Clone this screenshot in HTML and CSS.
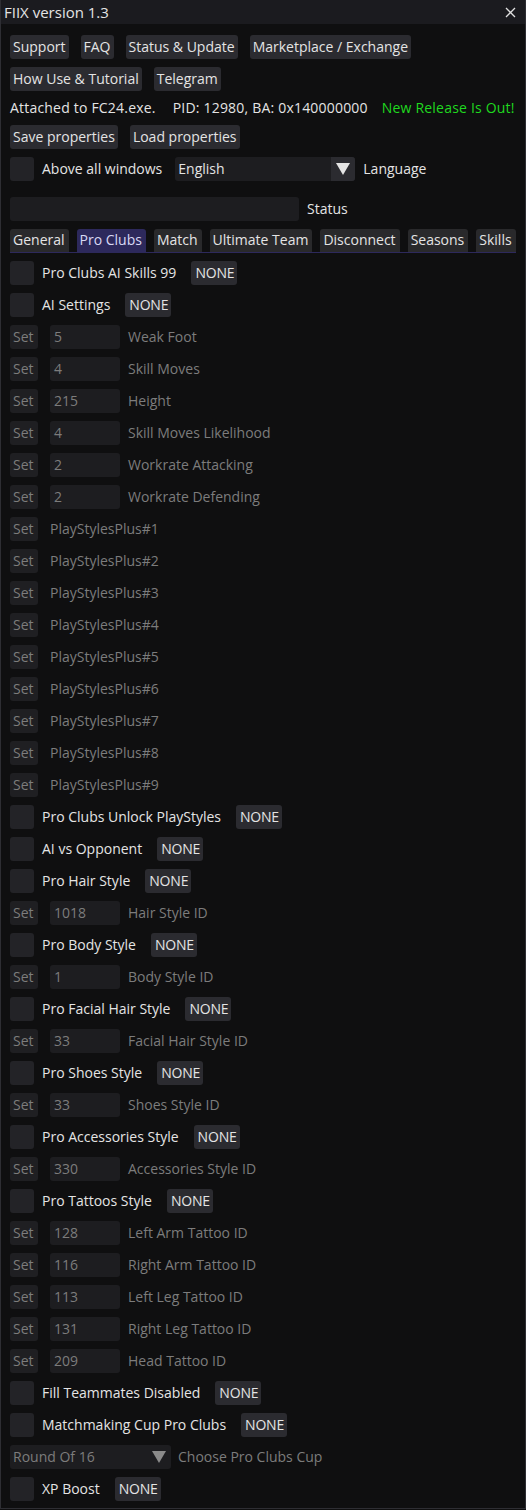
FILE: index.html
```html
<!DOCTYPE html>
<html lang="en">
<head>
    <meta charset="UTF-8">
    <title>FIIX version 1.3</title>
    <link rel="stylesheet" href="styles.css">
</head>
<body>
    <div class="window">
        <div class="titlebar">
            <span>FIIX version 1.3</span>
            <svg class="close" width="11" height="11" viewBox="0 0 11 11"><path d="M1 1L10 10M10 1L1 10" stroke="#e0e0e0" stroke-width="1.3"/></svg>
        </div>

        <div class="content">
            <div class="row">
                <span class="btn">Support</span>
                <span class="btn">FAQ</span>
                <span class="btn">Status &amp; Update</span>
                <span class="btn">Marketplace / Exchange</span>
            </div>
            <div class="row">
                <span class="btn">How Use &amp; Tutorial</span>
                <span class="btn">Telegram</span>
            </div>
            <div class="row text-row">
                <span class="attached">Attached to FC24.exe.<span class="gap"></span>PID: 12980, BA: 0x140000000</span>
                <span class="green">New Release Is Out!</span>
            </div>
            <div class="row">
                <span class="btn">Save properties</span>
                <span class="btn">Load properties</span>
            </div>
            <div class="row">
                <span class="check"></span>
                <span class="label">Above all windows</span>
                <span class="combo lang"><span>English</span><span class="arrow"><i></i></span></span>
                <span class="label">Language</span>
            </div>
            <div class="row spaced">
                <span class="input status-input"></span>
                <span class="label">Status</span>
            </div>

            <div class="tabs">
                <span class="tab">General</span>
                <span class="tab active">Pro Clubs</span>
                <span class="tab">Match</span>
                <span class="tab">Ultimate Team</span>
                <span class="tab">Disconnect</span>
                <span class="tab">Seasons</span>
                <span class="tab">Skills</span>
            </div>

            <div class="list" id="list"></div>
        </div>
    </div>

    <script>
        // rows of the Pro Clubs tab
        const rows = [
            ['c', 'Pro Clubs AI Skills 99'],
            ['c', 'AI Settings'],
            ['s', '5', 'Weak Foot'],
            ['s', '4', 'Skill Moves'],
            ['s', '215', 'Height'],
            ['s', '4', 'Skill Moves Likelihood'],
            ['s', '2', 'Workrate Attacking'],
            ['s', '2', 'Workrate Defending'],
            ['p', 'PlayStylesPlus#1'],
            ['p', 'PlayStylesPlus#2'],
            ['p', 'PlayStylesPlus#3'],
            ['p', 'PlayStylesPlus#4'],
            ['p', 'PlayStylesPlus#5'],
            ['p', 'PlayStylesPlus#6'],
            ['p', 'PlayStylesPlus#7'],
            ['p', 'PlayStylesPlus#8'],
            ['p', 'PlayStylesPlus#9'],
            ['c', 'Pro Clubs Unlock PlayStyles'],
            ['c', 'AI vs Opponent'],
            ['c', 'Pro Hair Style'],
            ['s', '1018', 'Hair Style ID'],
            ['c', 'Pro Body Style'],
            ['s', '1', 'Body Style ID'],
            ['c', 'Pro Facial Hair Style'],
            ['s', '33', 'Facial Hair Style ID'],
            ['c', 'Pro Shoes Style'],
            ['s', '33', 'Shoes Style ID'],
            ['c', 'Pro Accessories Style'],
            ['s', '330', 'Accessories Style ID'],
            ['c', 'Pro Tattoos Style'],
            ['s', '128', 'Left Arm Tattoo ID'],
            ['s', '116', 'Right Arm Tattoo ID'],
            ['s', '113', 'Left Leg Tattoo ID'],
            ['s', '131', 'Right Leg Tattoo ID'],
            ['s', '209', 'Head Tattoo ID'],
            ['c', 'Fill Teammates Disabled'],
            ['c', 'Matchmaking Cup Pro Clubs'],
            ['d', 'Round Of 16', 'Choose Pro Clubs Cup'],
            ['c', 'XP Boost']
        ];

        const list = document.getElementById('list');
        for (const r of rows) {
            const row = document.createElement('div');
            row.className = 'row';
            if (r[0] === 'c') {
                row.innerHTML = `<span class="check"></span><span class="label">${r[1]}</span><span class="btn none">NONE</span>`;
            } else if (r[0] === 's') {
                row.innerHTML = `<span class="btn dim">Set</span><span class="input small">${r[1]}</span><span class="label dim-text">${r[2]}</span>`;
            } else if (r[0] === 'p') {
                row.innerHTML = `<span class="btn dim">Set</span><span class="label plus">${r[1]}</span>`;
            } else {
                row.innerHTML = `<span class="combo cup"><span>${r[1]}</span><span class="arrow"><i></i></span></span><span class="label dim-text">${r[2]}</span>`;
            }
            list.appendChild(row);
        }
    </script>
</body>
</html>
```

FILE: styles.css
```css
:root {
    --bg: #0f0f10;
    --title-bg: #1b1b1f;
    --border: #2e2e33;
    --btn: #2b2b30;
    --frame: #1d1d20;
    --text: #e4e4e4;
    --dim: #7c7c7c;
    --tab-active: #2d295c;
}

html, body {
    margin: 0;
    height: 100%;
}

body {
    background: var(--bg);
    color: var(--text);
    font-family: 'Open Sans', sans-serif;
    font-size: 14px;
}

.window {
    box-sizing: border-box;
    height: 1509px;
    border: 1px solid var(--border);
    border-top: none;
    background: var(--bg);
}

.titlebar {
    height: 24px;
    background: var(--title-bg);
    display: flex;
    align-items: center;
    justify-content: space-between;
    padding: 0 9px 0 3px;
    font-size: 15px;
}

.close {
    display: block;
}

.content {
    padding: 11px 9px 0 9px;
    display: flex;
    flex-direction: column;
    gap: 8px;
}

.row {
    display: flex;
    align-items: center;
    height: 24px;
    gap: 12px;
    white-space: nowrap;
}

.label, .text-row span {
    padding-bottom: 2px;
}

.text-row {
    height: 18px;
    gap: 14px;
}

.attached {
    letter-spacing: 0.2px;
}

.attached .gap {
    display: inline-block;
    width: 17px;
}

.green {
    color: #1fd81f;
    letter-spacing: 0.2px;
}

.spaced {
    margin-top: 8px;
}

.btn {
    height: 24px;
    line-height: 23px;
    padding: 0 3px;
    background: var(--btn);
    border-radius: 3px;
}

.btn.none {
    padding: 0 3px 0 4px;
    letter-spacing: -0.2px;
}

.btn.dim {
    background: #1f1f22;
    color: var(--dim);
    width: 22px;
}

.check {
    width: 24px;
    height: 24px;
    background: #232327;
    border-radius: 3px;
    margin-right: -4px;
}

.check + .label {
    margin-right: 3px;
}

.dim-text {
    color: var(--dim);
    margin-left: -4px;
}

.plus {
    color: var(--dim);
}

.input {
    height: 24px;
    line-height: 23px;
    background: var(--frame);
    border-radius: 3px;
    box-sizing: border-box;
    padding: 0 4px;
}

.input.small {
    width: 70px;
    color: var(--dim);
}

.status-input {
    width: 289px;
    margin-right: -4px;
}

.combo {
    display: flex;
    height: 24px;
    line-height: 23px;
    background: var(--frame);
    border-radius: 3px;
    box-sizing: border-box;
    padding-left: 3px;
    justify-content: space-between;
}

.combo .arrow {
    width: 24px;
    display: flex;
    align-items: center;
    justify-content: center;
    border-radius: 0 3px 3px 0;
}

.combo .arrow i {
    width: 0;
    height: 0;
    border-left: 7px solid transparent;
    border-right: 7px solid transparent;
    border-top: 12px solid #e4e4e4;
}

.lang {
    width: 180px;
    margin-left: -2px;
    margin-right: -4px;
}

.lang .arrow {
    background: #2b2b30;
}

.cup {
    width: 161px;
    color: var(--dim);
    margin-right: -1px;
}

.cup .arrow i {
    border-top-color: #8a8a8a;
}

.tabs {
    display: flex;
    gap: 8px;
    height: 23px;
    border-bottom: 1px solid var(--tab-active);
}

.tab {
    height: 23px;
    line-height: 22px;
    padding: 0 4px 0 3px;
    background: #29292b;
    border-radius: 3px 3px 0 0;
}

.tab.active {
    background: var(--tab-active);
    color: #d8d8f4;
}

.list {
    display: flex;
    flex-direction: column;
    gap: 8px;
}
```
